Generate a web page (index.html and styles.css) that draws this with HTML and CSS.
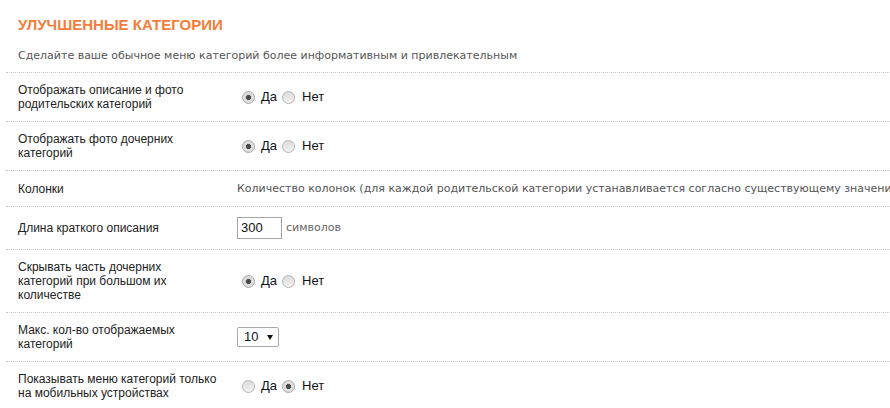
FILE: index.html
```html
<!DOCTYPE html>
<html lang="ru">
<head>
<meta charset="utf-8">
<title>Улучшенные категории</title>
<link rel="stylesheet" href="styles.css">
</head>
<body>
<div class="page">
  <h2 class="title">УЛУЧШЕННЫЕ КАТЕГОРИИ</h2>
  <p class="subtitle">Сделайте ваше обычное меню категорий более информативным и привлекательным</p>
  <div class="rows">
    <div class="row">
      <div class="label">Отображать описание и фото родительских категорий</div>
      <div class="value">
        <div class="choice">
          <span class="radio checked"></span><span class="opt">Да</span>
          <span class="radio second"></span><span class="opt opt-last">Нет</span>
        </div>
      </div>
    </div>
    <div class="row">
      <div class="label">Отображать фото дочерних категорий</div>
      <div class="value">
        <div class="choice">
          <span class="radio checked"></span><span class="opt">Да</span>
          <span class="radio second"></span><span class="opt opt-last">Нет</span>
        </div>
      </div>
    </div>
    <div class="row">
      <div class="label">Колонки</div>
      <div class="value"><span class="hint">Количество колонок (для каждой родительской категории устанавливается согласно существующему значению)</span></div>
    </div>
    <div class="row">
      <div class="label">Длина краткого описания</div>
      <div class="value">
        <div class="inline">
          <span class="textbox">300</span><span class="unit">символов</span>
        </div>
      </div>
    </div>
    <div class="row">
      <div class="label">Скрывать часть дочерних категорий при большом их количестве</div>
      <div class="value">
        <div class="choice">
          <span class="radio checked"></span><span class="opt">Да</span>
          <span class="radio second"></span><span class="opt opt-last">Нет</span>
        </div>
      </div>
    </div>
    <div class="row">
      <div class="label">Макс. кол-во отображаемых категорий</div>
      <div class="value">
        <div class="select"><span class="select-text">10</span><svg class="caret" width="6" height="5" viewBox="0 0 6 5"><path d="M0 0H6L3 5Z" fill="#111"/></svg></div>
      </div>
    </div>
    <div class="row">
      <div class="label">Показывать меню категорий только на мобильных устройствах</div>
      <div class="value">
        <div class="choice">
          <span class="radio"></span><span class="opt">Да</span>
          <span class="radio second checked"></span><span class="opt opt-last">Нет</span>
        </div>
      </div>
    </div>
  </div>
</div>
</body>
</html>
```

FILE: styles.css
```css
html, body {
  margin: 0;
  padding: 0;
  background: #fff;
  overflow: hidden;
}

.page {
  padding-left: 6px;
  overflow: hidden;
  font-family: "Liberation Sans", Arial, sans-serif;
  font-size: 12px;
  line-height: 14px;
}

.title {
  margin: 15px 0 0 0;
  padding-left: 12px;
  font-size: 15px;
  line-height: 20px;
  font-weight: bold;
  color: #f57d3b;
}

.subtitle {
  margin: 14px 0 9px 0;
  padding-left: 12px;
  font-family: "DejaVu Sans", Verdana, sans-serif;
  font-size: 11px;
  line-height: 14px;
  color: #555;
  white-space: nowrap;
}

.row {
  display: flex;
  align-items: center;
  border-top: 1px dotted #c4c4c4;
  padding: 10px 0 10px 12px;
}

.label {
  flex: none;
  width: 200px;
  margin-right: 19px;
  font-size: 12px;
  line-height: 14px;
  color: #222;
}

.value {
  flex: 1;
  min-width: 0;
  font-size: 12px;
  line-height: 14px;
  white-space: nowrap;
}

.choice {
  display: flex;
  align-items: center;
  font-size: 13px;
  line-height: 14px;
  color: #111;
}

.radio {
  flex: none;
  box-sizing: border-box;
  width: 13px;
  height: 13px;
  margin-left: 5px;
  margin-right: 6px;
  border-radius: 50%;
  border: 1px solid #b4b4b4;
  background: linear-gradient(#dcdcdc, #f2f2f2);
}

.radio.second {
  margin-left: 5px;
  margin-right: 7px;
}

.radio.checked {
  background: radial-gradient(circle, #4a4a4a 0, #4a4a4a 2.2px, #d8d8d8 2.9px, #e9e9e9 100%);
  border-color: #a8a8a8;
}

.hint {
  font-family: "DejaVu Sans", Verdana, sans-serif;
  font-size: 11px;
  line-height: 14px;
  color: #555;
}

.inline {
  display: flex;
  align-items: center;
}

.textbox {
  box-sizing: border-box;
  width: 45px;
  height: 22px;
  padding-left: 3px;
  border: 1px solid #a6a6a6;
  font-size: 13px;
  line-height: 20px;
  color: #111;
}

.unit {
  margin-left: 4px;
  font-family: "DejaVu Sans", Verdana, sans-serif;
  font-size: 11px;
  color: #666;
}

.select {
  box-sizing: border-box;
  display: flex;
  align-items: center;
  width: 42px;
  height: 20px;
  padding-left: 6px;
  border: 1px solid #a9a9a9;
  border-radius: 2px;
  font-size: 13px;
  color: #111;
}

.select-text {
  flex: 1;
}

.caret {
  margin-right: 5px;
}
```
